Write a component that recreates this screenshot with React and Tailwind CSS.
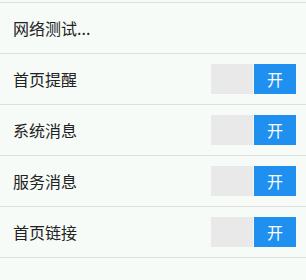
import React from 'react';

const rows = ['首页提醒', '系统消息', '服务消息', '首页链接'];

function Toggle() {
  return (
    <div className="flex h-[30px] w-[85px]">
      <div className="w-[42px] bg-[#e8e9e8]" />
      <div className="w-px bg-[#f4f6f5]" />
      <div className="flex w-[42px] items-center justify-center bg-[#1f8ff0] text-[16px] text-white">
        开
      </div>
    </div>
  );
}

export default function App() {
  return (
    <div
      className="h-[280px] w-[306px] bg-[#f7fbf8] pt-[2px] text-[#222]"
      style={{ fontFamily: '"Noto Sans CJK SC", "Noto Sans", sans-serif' }}
    >
      <div className="border-t border-[#dcdfdd]">
        <div className="flex h-[51px] items-center border-b border-[#dcdfdd] pl-[13px] text-[16px]">
          网络测试...
        </div>
        {rows.map((label) => (
          <div
            key={label}
            className="flex h-[51px] items-center justify-between border-b border-[#dcdfdd] pl-[13px] pr-[10px] text-[16px]"
          >
            <span>{label}</span>
            <Toggle />
          </div>
        ))}
      </div>
    </div>
  );
}
